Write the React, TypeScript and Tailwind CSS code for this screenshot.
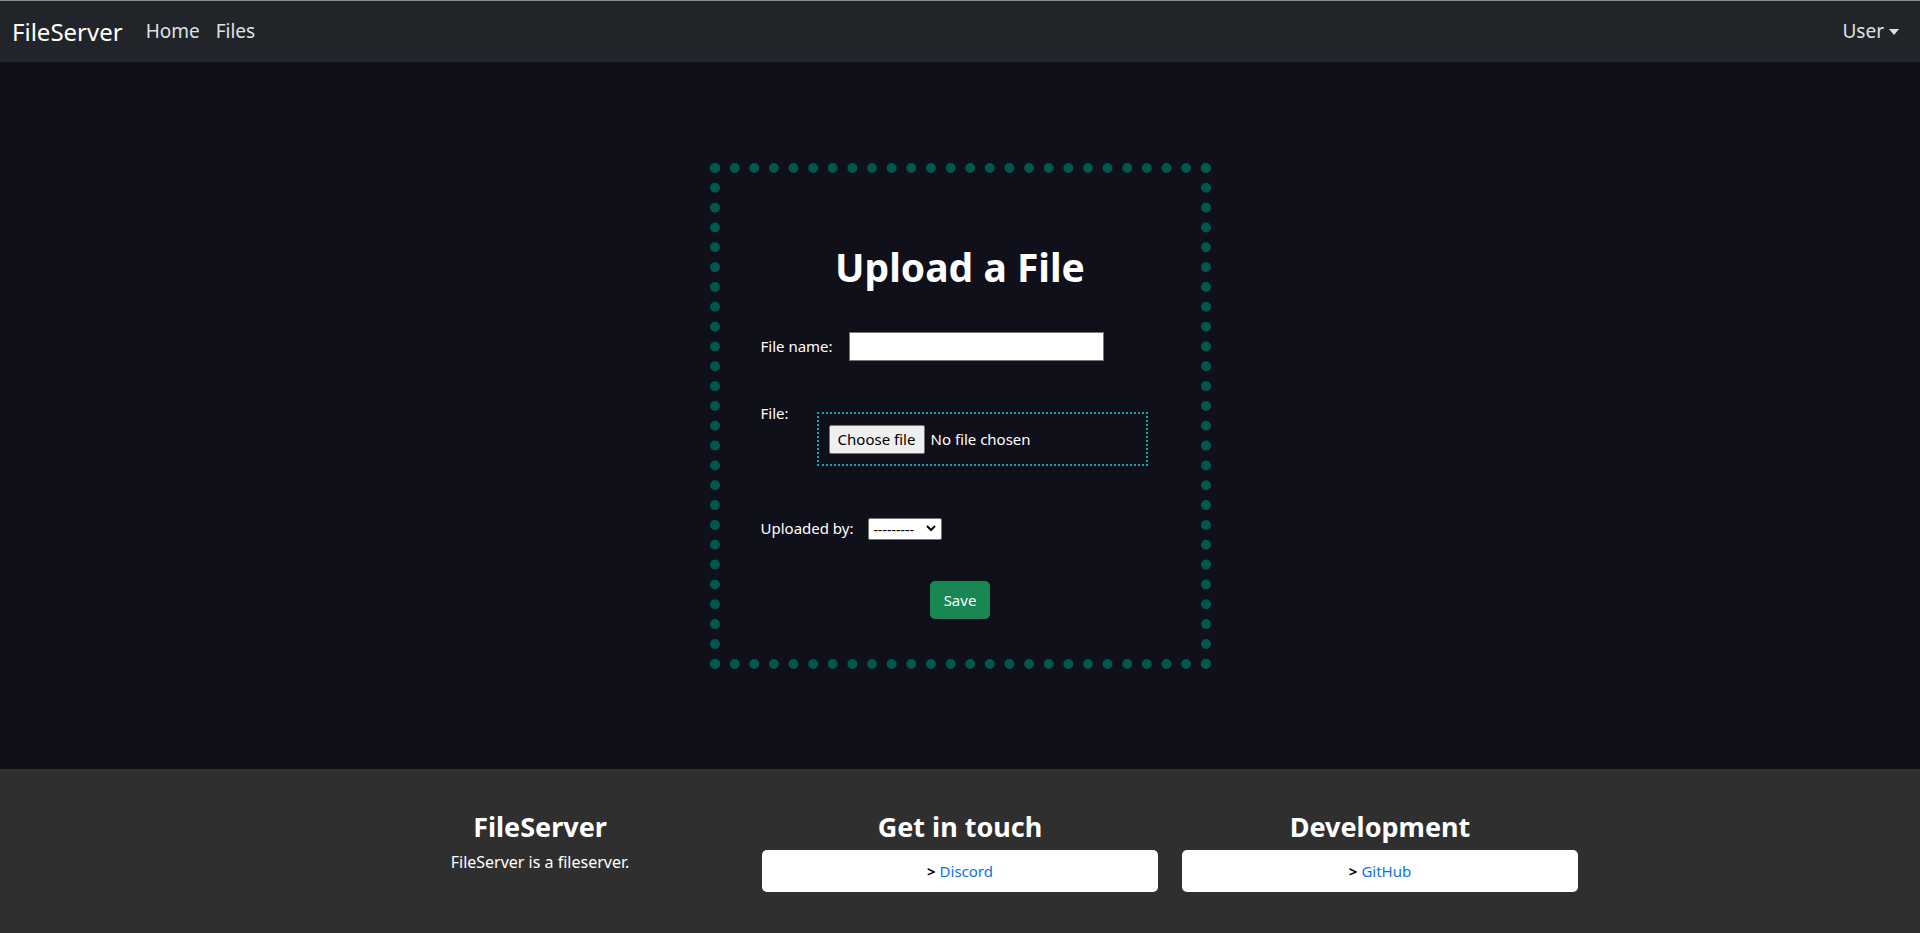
export default function App() {
  return (
    <div className="flex min-h-screen flex-col bg-[#0f1019] font-['Noto_Sans',sans-serif] text-white">
      <nav className="flex h-[62px] items-center border-t border-[#8a8a8a] bg-[#212529] pl-[12px] pr-[21px]">
        <a href="#" className="mr-[23px] text-[24px] text-white">
          FileServer
        </a>
        <a href="#" className="mr-[16px] text-[19px] text-[#dee2e6]">
          Home
        </a>
        <a href="#" className="text-[19px] text-[#dee2e6]">
          Files
        </a>
        <button className="ml-auto flex items-center gap-[5px] text-[19px] text-[#dee2e6]">
          User
          <span className="h-0 w-0 border-x-[5px] border-t-[6px] border-x-transparent border-t-[#dee2e6]" />
        </button>
      </nav>

      <main className="flex h-[707px] justify-center pt-[101px]">
        <form className="flex h-[506px] w-[501px] flex-col border-[10px] border-dotted border-[#00574d] px-[41px]">
          <h1 className="mt-[70px] text-center text-[39px] font-bold leading-[48px]">
            Upload a File
          </h1>

          <div className="mt-[41px] flex h-[29px] items-center">
            <label className="text-[15px]">File name:</label>
            <input
              type="text"
              className="ml-[16px] h-[29px] w-[255px] border border-[#767676] bg-white text-black"
            />
          </div>

          <div className="mt-[40px] flex items-start">
            <label className="w-[56px] text-[15px] leading-[24px]">File:</label>
            <div className="mt-[11px] flex h-[54px] w-[331px] items-center border-2 border-dotted border-[#14a8a8] px-[10px]">
              <span className="flex h-[29px] w-[96px] items-center justify-center rounded-[2px] border border-[#767676] bg-[#efefef] text-[15px] text-black">
                Choose file
              </span>
              <span className="ml-[6px] text-[15px]">No file chosen</span>
            </div>
          </div>

          <div className="mt-[51px] flex h-[22px] items-center">
            <label className="text-[15px]">Uploaded by:</label>
            <div className="relative ml-[15px] h-[22px] w-[74px]">
              <select className="h-[22px] w-[74px] appearance-none rounded-[2px] border border-[#767676] bg-white pl-[4px] text-[14px] text-black">
                <option>---------</option>
              </select>
              <svg
                className="pointer-events-none absolute right-[6px] top-[7px]"
                width="10"
                height="8"
                viewBox="0 0 10 8"
                fill="none"
              >
                <path d="M1 2l4 4 4-4" stroke="#000" strokeWidth="2" />
              </svg>
            </div>
          </div>

          <button
            type="button"
            className="mx-auto mt-[42px] h-[38px] w-[60px] rounded-[5px] bg-[#198754] text-[15px] text-white"
          >
            Save
          </button>
        </form>
      </main>

      <footer className="flex h-[164px] justify-center bg-[#2f2f2f] pt-[43px]">
        <div className="grid w-[1260px] grid-cols-3">
          <div className="px-[12px] text-center">
            <h3 className="mb-[9px] text-[27px] font-bold leading-[29px]">FileServer</h3>
            <p className="text-[16px] leading-[24px]">FileServer is a fileserver.</p>
          </div>
          <div className="px-[12px] text-center">
            <h3 className="mb-[9px] text-[27px] font-bold leading-[29px]">Get in touch</h3>
            <div className="flex h-[42px] items-center justify-center rounded-[5px] bg-white text-[15px]">
              <span className="mr-[4px] font-bold text-black">&gt;</span>
              <a href="#" className="text-[#0d6efd]">
                Discord
              </a>
            </div>
          </div>
          <div className="px-[12px] text-center">
            <h3 className="mb-[9px] text-[27px] font-bold leading-[29px]">Development</h3>
            <div className="flex h-[42px] items-center justify-center rounded-[5px] bg-white text-[15px]">
              <span className="mr-[4px] font-bold text-black">&gt;</span>
              <a href="#" className="text-[#0d6efd]">
                GitHub
              </a>
            </div>
          </div>
        </div>
      </footer>
    </div>
  );
}
